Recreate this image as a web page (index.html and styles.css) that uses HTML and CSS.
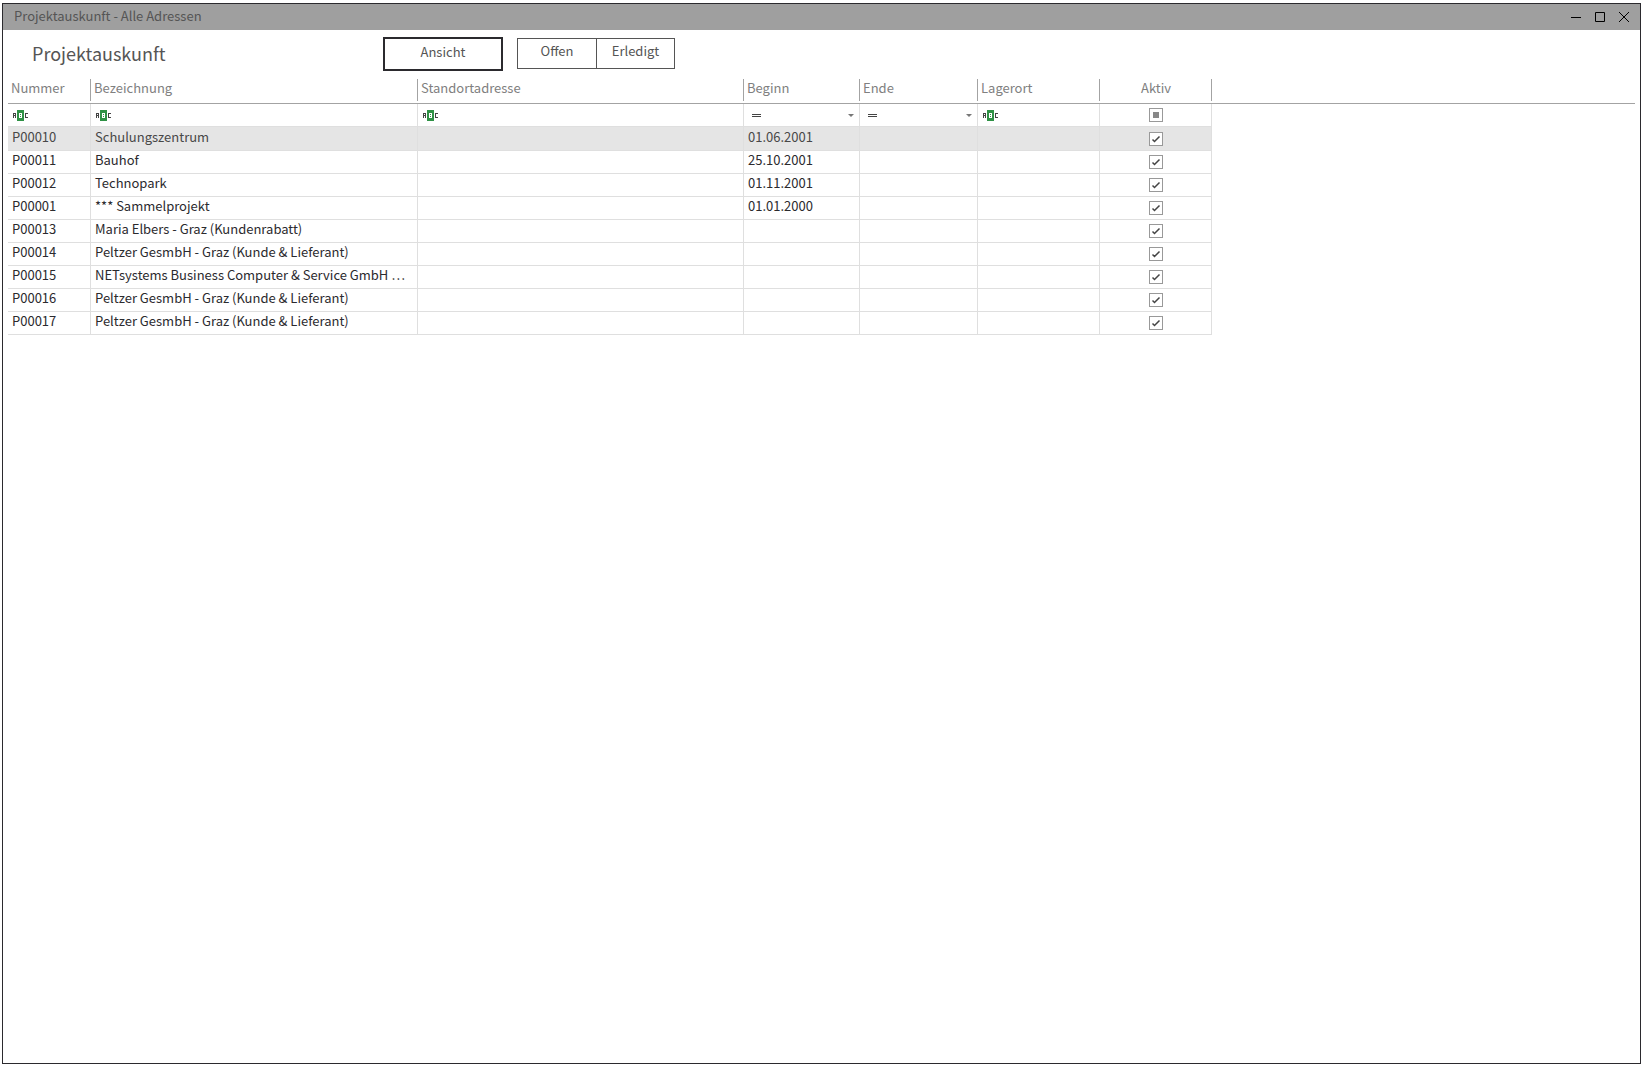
FILE: index.html
```
<!DOCTYPE html>
<html lang="de">
<head>
<meta charset="utf-8">
<title>Projektauskunft - Alle Adressen</title>
<link rel="stylesheet" href="styles.css">
</head>
<body>
<svg class="defs" aria-hidden="true">
  <symbol id="abc" viewBox="0 0 15 11">
    <path fill="#444" d="M0 3h3v5h-1v-2h-1v2h-1zM12 3h3v1h-2v3h2v1h-3z"/>
    <path fill="#fff" d="M1 4h1v1h-1z"/>
    <path fill="#2f9145" d="M4 0h7v11h-7z"/>
    <path fill="#fff" fill-rule="evenodd" d="M6 3h3v5h-3zM7 4v1h1v-1zM7 6v1h1v-1z"/>
  </symbol>
  <symbol id="equals" viewBox="0 0 9 3">
    <path fill="#444" d="M0 0h9v1h-9zM0 2h9v1h-9z"/>
  </symbol>
  <symbol id="arrow" viewBox="0 0 6 3">
    <path fill="#777" d="M0 0h6l-3 3z"/>
  </symbol>
</svg>
<main class="window">
  <header class="titlebar">
    <span class="caption">Projektauskunft - Alle Adressen</span>
    <div class="window-buttons">
      <button type="button" aria-label="Minimieren"><svg width="10" height="10" viewBox="0 0 10 10"><path fill="#000" d="M0 5h10v1h-10z"/></svg></button>
      <button type="button" aria-label="Maximieren"><svg width="10" height="10" viewBox="0 0 10 10"><path fill="none" stroke="#000" d="M.5 .5h9v9h-9z"/></svg></button>
      <button type="button" aria-label="Schließen"><svg width="10" height="10" viewBox="0 0 10 10"><path fill="none" stroke="#000" d="M0 0l10 10M10 0l-10 10"/></svg></button>
    </div>
  </header>
  <div class="toolbar">
    <h1>Projektauskunft</h1>
    <button type="button" class="view">Ansicht</button>
    <div class="status">
      <button type="button">Offen</button>
      <button type="button">Erledigt</button>
    </div>
  </div>
  <table class="grid">
    <colgroup>
      <col class="c-number"><col class="c-name"><col class="c-site"><col class="c-begin"><col class="c-end"><col class="c-store"><col class="c-active"><col>
    </colgroup>
    <thead>
      <tr class="heads">
        <th>Nummer</th><th>Bezeichnung</th><th>Standortadresse</th><th>Beginn</th><th>Ende</th><th>Lagerort</th><th class="center">Aktiv</th><th></th>
      </tr>
      <tr class="filters">
        <td><div class="filter"><button type="button" aria-label="Filterart Nummer"><svg width="15" height="11"><use href="#abc"/></svg></button><input type="text" aria-label="Filter Nummer"></div></td>
        <td><div class="filter"><button type="button" aria-label="Filterart Bezeichnung"><svg width="15" height="11"><use href="#abc"/></svg></button><input type="text" aria-label="Filter Bezeichnung"></div></td>
        <td><div class="filter"><button type="button" aria-label="Filterart Standortadresse"><svg width="15" height="11"><use href="#abc"/></svg></button><input type="text" aria-label="Filter Standortadresse"></div></td>
        <td><div class="filter date"><button type="button" aria-label="Filterart Beginn"><svg width="9" height="3"><use href="#equals"/></svg></button><input type="text" aria-label="Filter Beginn"><button type="button" aria-label="Datum wählen"><svg width="6" height="3"><use href="#arrow"/></svg></button></div></td>
        <td><div class="filter date"><button type="button" aria-label="Filterart Ende"><svg width="9" height="3"><use href="#equals"/></svg></button><input type="text" aria-label="Filter Ende"><button type="button" aria-label="Datum wählen"><svg width="6" height="3"><use href="#arrow"/></svg></button></div></td>
        <td><div class="filter"><button type="button" aria-label="Filterart Lagerort"><svg width="15" height="11"><use href="#abc"/></svg></button><input type="text" aria-label="Filter Lagerort"></div></td>
        <td class="center"><input type="checkbox" class="mixed" aria-label="Filter Aktiv"></td>
        <td></td>
      </tr>
    </thead>
    <tbody>
      <tr class="selected"><td>P00010</td><td>Schulungszentrum</td><td></td><td>01.06.2001</td><td></td><td></td><td class="center"><input type="checkbox" checked aria-label="Aktiv P00010"></td><td></td></tr>
      <tr><td>P00011</td><td>Bauhof</td><td></td><td>25.10.2001</td><td></td><td></td><td class="center"><input type="checkbox" checked aria-label="Aktiv P00011"></td><td></td></tr>
      <tr><td>P00012</td><td>Technopark</td><td></td><td>01.11.2001</td><td></td><td></td><td class="center"><input type="checkbox" checked aria-label="Aktiv P00012"></td><td></td></tr>
      <tr><td>P00001</td><td>*** Sammelprojekt</td><td></td><td>01.01.2000</td><td></td><td></td><td class="center"><input type="checkbox" checked aria-label="Aktiv P00001"></td><td></td></tr>
      <tr><td>P00013</td><td>Maria Elbers - Graz (Kundenrabatt)</td><td></td><td></td><td></td><td></td><td class="center"><input type="checkbox" checked aria-label="Aktiv P00013"></td><td></td></tr>
      <tr><td>P00014</td><td>Peltzer GesmbH - Graz (Kunde &amp; Lieferant)</td><td></td><td></td><td></td><td></td><td class="center"><input type="checkbox" checked aria-label="Aktiv P00014"></td><td></td></tr>
      <tr><td>P00015</td><td>NETsystems Business Computer &amp; Service GmbH …</td><td></td><td></td><td></td><td></td><td class="center"><input type="checkbox" checked aria-label="Aktiv P00015"></td><td></td></tr>
      <tr><td>P00016</td><td>Peltzer GesmbH - Graz (Kunde &amp; Lieferant)</td><td></td><td></td><td></td><td></td><td class="center"><input type="checkbox" checked aria-label="Aktiv P00016"></td><td></td></tr>
      <tr><td>P00017</td><td>Peltzer GesmbH - Graz (Kunde &amp; Lieferant)</td><td></td><td></td><td></td><td></td><td class="center"><input type="checkbox" checked aria-label="Aktiv P00017"></td><td></td></tr>
    </tbody>
  </table>
</main>
</body>
</html>
```
FILE: styles.css
```
* { box-sizing: border-box; }

body {
  margin: 0;
  padding: 3px 5px 5px 2px;
  min-height: 100vh;
  display: flex;
  background: #fff;
  color: #2b2a2e;
  font: 13px/20px "Noto Sans CJK SC", "Noto Sans", sans-serif;
}

button, input { font: inherit; color: inherit; }

button {
  padding: 0;
  border: 0;
  background: none;
}

svg { display: block; }

.defs { position: absolute; width: 0; height: 0; }

.window {
  flex: 1;
  min-width: 0;
  border: 1px solid #2b2a2e;
}

.titlebar {
  display: flex;
  justify-content: space-between;
  height: 26px;
  padding: 0 11px;
  background: #9f9f9f;
  color: #555;
}

.caption { line-height: 24px; }

.window-buttons { display: flex; align-items: center; gap: 14px; }

.toolbar {
  display: flex;
  height: 46px;
  padding: 7px 29px 0;
  color: #555;
}

h1 {
  width: 337px;
  margin: 0 14px 0 0;
  font-size: 18px;
  font-weight: 400;
  line-height: 32px;
}

.view {
  width: 120px;
  height: 34px;
  margin-right: 14px;
  padding-bottom: 5px;
  border: 2px solid #2b2a2e;
}

.status { display: flex; height: 31px; margin-top: 1px; }

.status button {
  width: 78px;
  padding-bottom: 6px;
  border: 1px solid #555;
}

.status button + button { border-left: 0; }

.status button:first-child { width: 80px; }

.grid {
  width: calc(100% - 10px);
  margin: 0 5px;
  table-layout: fixed;
  border-collapse: separate;
  border-spacing: 0;
}

.c-number { width: 83px; }
.c-name { width: 327px; }
.c-site { width: 326px; }
.c-begin { width: 116px; }
.c-end { width: 118px; }
.c-store { width: 122px; }
.c-active { width: 112px; }

.heads th {
  height: 28px;
  padding: 0 3px 3px;
  border-bottom: 1px solid #a3a3a3;
  background: linear-gradient(#a3a3a3, #a3a3a3) right 3px / 1px 22px no-repeat;
  color: #808080;
  font-weight: 400;
  text-align: left;
}

.heads th:last-child { background: none; }

.grid td {
  height: 23px;
  padding: 0 4px 4px;
  border: solid #dfdfdf;
  border-width: 0 1px 1px 0;
  line-height: 18px;
  overflow: hidden;
  white-space: nowrap;
}

.grid td:last-child { border: 0; }

.grid .selected td { height: 24px; color: #484848; }

.selected td:not(:last-child) { background: #e5e5e5; }

.grid .center { text-align: center; }

.grid td.center { padding: 0; }

.grid .filters td { padding: 0; }

.filter {
  display: flex;
  align-items: center;
  height: 22px;
  padding: 0 5px;
}

.filter input {
  flex: 1;
  min-width: 0;
  height: 20px;
  padding: 0 4px;
  border: 0;
  background: none;
  outline: 0;
}

.date { padding-left: 8px; }

input[type="checkbox"] {
  appearance: none;
  display: block;
  width: 14px;
  height: 14px;
  margin: 0 auto;
  border: 1px solid #999;
  background: #fff center / 12px 12px no-repeat;
}

input[type="checkbox"]:checked {
  background-image: url("data:image/svg+xml,%3Csvg xmlns='http://www.w3.org/2000/svg' viewBox='0 0 12 12'%3E%3Cpath d='M2.500 6.500L4.500 8.500L9.500 3.500' fill='none' stroke='%23444' stroke-width='1.500'/%3E%3C/svg%3E");
}

input.mixed {
  background-image: linear-gradient(#888, #888);
  background-size: 6px 6px;
}
```
